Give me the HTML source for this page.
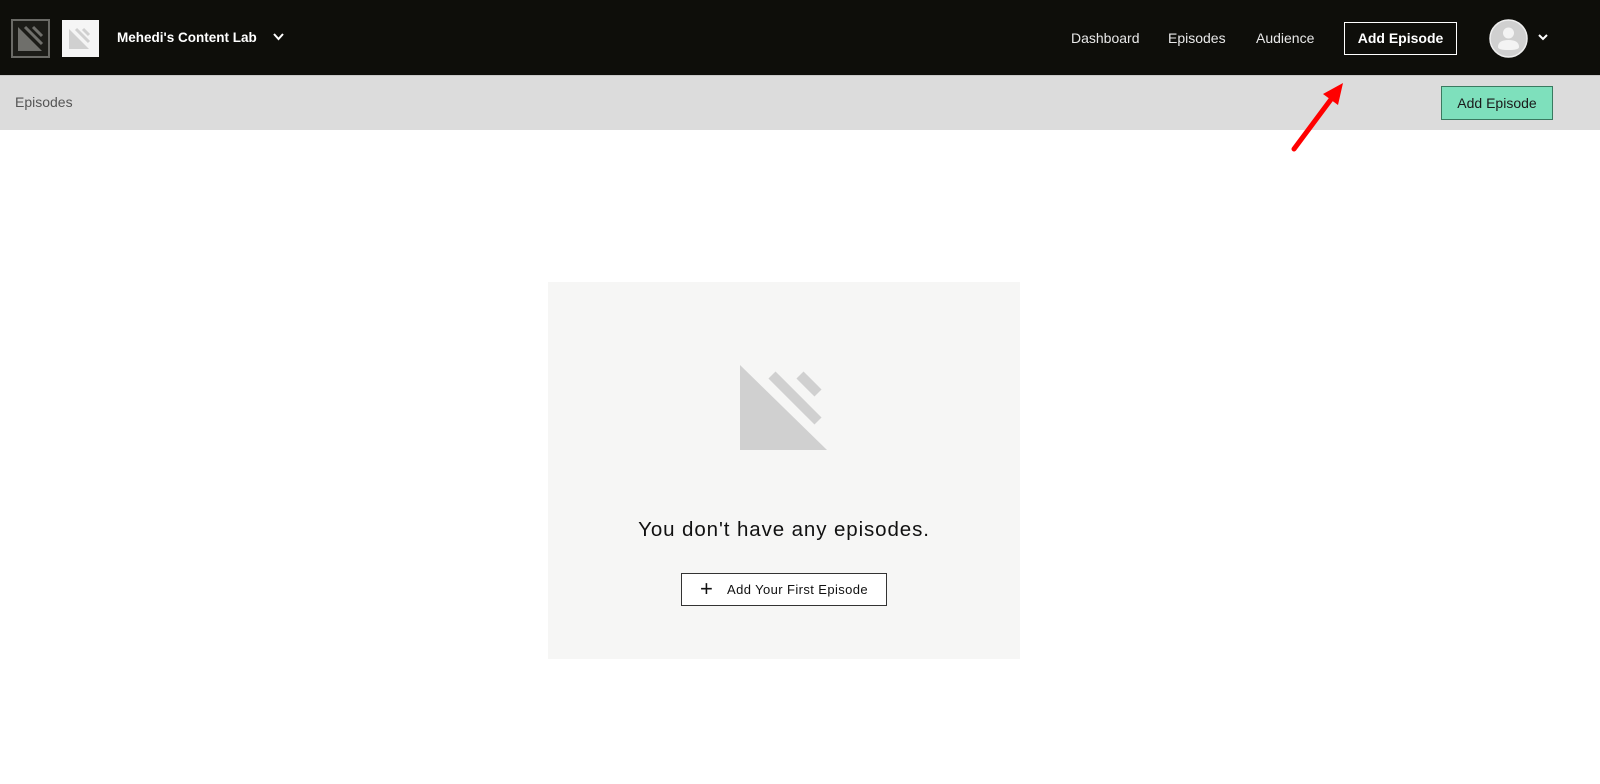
<!DOCTYPE html>
<html><head><meta charset="utf-8"><style>
*{margin:0;padding:0;box-sizing:border-box}
body{width:1600px;height:784px;overflow:hidden;background:#fff;font-family:"Liberation Sans",Arial,sans-serif;position:relative}
.top{position:absolute;left:0;top:0;width:1600px;height:75px;background:#0e0e0a}
.sub{position:absolute;left:0;top:75px;width:1600px;height:55px;background:#dcdcdc;border-top:1px solid #c8c8c8}
.abs{position:absolute}
.nav{color:#e8e8e8;font-size:14px;top:30px}
</style></head><body>
<div class="top">
  <svg class="abs" style="left:11px;top:19px" width="39" height="39" viewBox="0 0 39 39">
    <rect x="1" y="1" width="37" height="37" fill="#1c1c18" stroke="#6a6a66" stroke-width="2"/>
    <polygon points="7,8 7,32 31,32" fill="#6f6f6b"/>
    <line x1="14" y1="8" x2="31" y2="25" stroke="#6f6f6b" stroke-width="3"/>
    <line x1="22" y1="8" x2="31" y2="17" stroke="#6f6f6b" stroke-width="3"/>
  </svg>
  <svg class="abs" style="left:62px;top:20px" width="37" height="37" viewBox="0 0 37 37">
    <rect width="37" height="37" fill="#f5f5f5"/>
    <polygon points="7,9 7,29 27,29" fill="#d0d0d0"/>
    <line x1="14" y1="9" x2="27" y2="22" stroke="#d0d0d0" stroke-width="3"/>
    <line x1="21" y1="9" x2="27" y2="15" stroke="#d0d0d0" stroke-width="3"/>
  </svg>
  <div class="abs" style="left:117px;top:30px;color:#fff;font-size:13.5px;font-weight:bold">Mehedi's Content Lab</div>
  <svg class="abs" style="left:272px;top:32px" width="13" height="10" viewBox="0 0 13 10"><polyline points="2,2 6.5,7 11,2" fill="none" stroke="#fff" stroke-width="2"/></svg>
  <div class="abs nav" style="left:1071px">Dashboard</div>
  <div class="abs nav" style="left:1168px">Episodes</div>
  <div class="abs nav" style="left:1256px">Audience</div>
  <div class="abs" style="left:1344px;top:22px;width:113px;height:33px;border:1px solid #fff;color:#fff;font-size:14px;font-weight:bold;text-align:center;line-height:31px">Add Episode</div>
  <svg class="abs" style="left:1489px;top:19px" width="39" height="39" viewBox="0 0 39 39">
    <circle cx="19.5" cy="19.5" r="18.5" fill="#d0d0d0" stroke="#eee" stroke-width="1.5"/>
    <circle cx="19.5" cy="14" r="5.5" fill="#f3f3f3"/>
    <path d="M9 28 Q9 21 19.5 21 Q30 21 30 28 Q30 31 19.5 31 Q9 31 9 28Z" fill="#f3f3f3"/>
  </svg>
  <svg class="abs" style="left:1537px;top:33px" width="12" height="9" viewBox="0 0 12 9"><polyline points="2,2 6,6 10,2" fill="none" stroke="#fff" stroke-width="2"/></svg>
</div>
<div class="sub">
  <div class="abs" style="left:15px;top:18px;color:#555;font-size:14px">Episodes</div>
  <div class="abs" style="left:1441px;top:10px;width:112px;height:34px;background:#7ee0bc;border:1px solid #3a7a60;color:#1a1a1a;font-size:14px;text-align:center;line-height:32px">Add Episode</div>
</div>
<svg class="abs" style="left:1285px;top:78px" width="70" height="80" viewBox="0 0 70 80">
  <line x1="9" y1="71" x2="47" y2="20" stroke="#f00" stroke-width="5" stroke-linecap="round"/>
  <polygon points="58,5 38,16 53,27" fill="#f00"/>
</svg>
<div class="abs" style="left:548px;top:282px;width:472px;height:377px;background:#f6f6f5">
  <svg class="abs" style="left:192px;top:83px" width="90" height="90" viewBox="0 0 90 90">
    <polygon points="0,0 0,85 87,85" fill="#d0d0d0"/>
    <line x1="32" y1="10" x2="78" y2="56" stroke="#d0d0d0" stroke-width="10"/>
    <line x1="60" y1="10" x2="78" y2="28" stroke="#d0d0d0" stroke-width="10"/>
  </svg>
  <div class="abs" style="left:0;top:236px;width:472px;text-align:center;font-size:20.5px;letter-spacing:0.9px;color:#111">You don't have any episodes.</div>
  <div class="abs" style="left:133px;top:291px;width:206px;height:33px;border:1px solid #333;background:#fff;font-size:13px;letter-spacing:0.4px;color:#111;line-height:31px">
    <span style="position:absolute;left:18px;top:-1px;font-size:22px">+</span>
    <span style="position:absolute;left:45px">Add Your First Episode</span>
  </div>
</div>
</body></html>
